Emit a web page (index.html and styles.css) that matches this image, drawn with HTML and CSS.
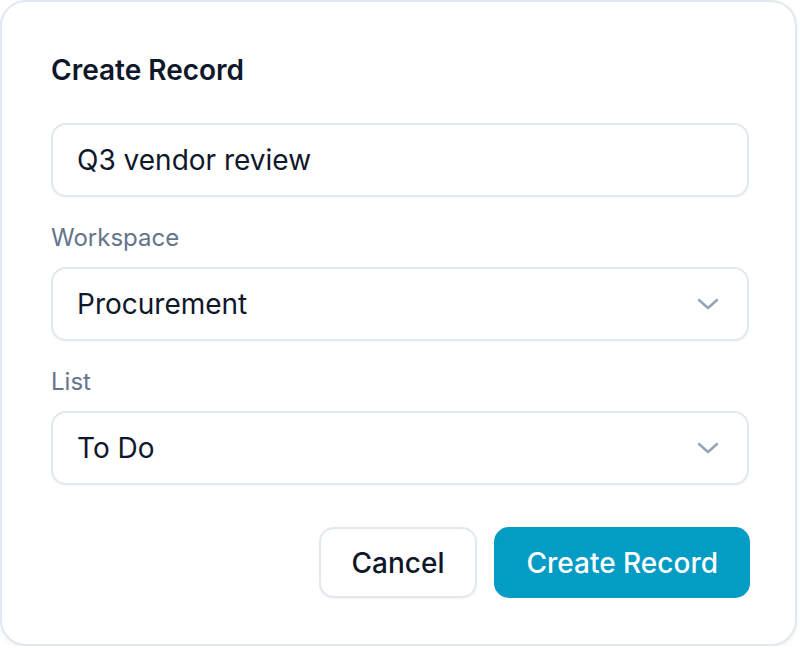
FILE: index.html
```html
<!DOCTYPE html>
<html lang="en">
<head>
<meta charset="utf-8">
<title>Create Record</title>
<link rel="stylesheet" href="styles.css">
</head>
<body>
<div class="card">
  <h2 class="title">Create Record</h2>
  <div class="input">Q3 vendor review</div>
  <div class="label">Workspace</div>
  <div class="input select">
    <span>Procurement</span>
    <svg class="chev" width="22" height="12" viewBox="0 0 22 12"><path d="M2 2 L11 10 L20 2" fill="none" stroke="#94a3b8" stroke-width="2.4" stroke-linecap="round" stroke-linejoin="round"/></svg>
  </div>
  <div class="label">List</div>
  <div class="input select">
    <span>To Do</span>
    <svg class="chev" width="22" height="12" viewBox="0 0 22 12"><path d="M2 2 L11 10 L20 2" fill="none" stroke="#94a3b8" stroke-width="2.4" stroke-linecap="round" stroke-linejoin="round"/></svg>
  </div>
  <div class="actions">
    <button class="btn btn-cancel">Cancel</button>
    <button class="btn btn-primary">Create Record</button>
  </div>
</div>
</body>
</html>
```
FILE: styles.css
```css
* { box-sizing: border-box; }
html, body { margin: 0; padding: 0; background: #ffffff; }
body { font-family: Inter, "Noto Sans", sans-serif; color: #0f172a; }
.card {
  width: 797px;
  height: 646px;
  border: 2px solid #e2e8f0;
  border-radius: 26px;
  padding: 53px 46px 0 49px;
  background: #fff;
  box-shadow: 0 2px 4px rgba(15, 23, 42, 0.06);
}
.title {
  margin: 0;
  font-size: 28px;
  line-height: 30px;
  font-weight: 600;
  color: #0f172a;
}
.input {
  margin-top: 38px;
  height: 74px;
  border: 2px solid #e2e8f0;
  border-radius: 15px;
  padding: 0 28px 0 24px;
  display: flex;
  align-items: center;
  font-size: 28px;
  color: #0f172a;
  background: #fff;
  box-shadow: 0 1px 2px rgba(15, 23, 42, 0.05);
}
.label {
  margin-top: 27px;
  margin-bottom: 15px;
  font-size: 24px;
  line-height: 28px;
  color: #64748b;
}
.label + .input { margin-top: 0; }
.select { justify-content: space-between; }
.chev { display: block; }
.actions {
  margin-top: 42px;
  display: flex;
  justify-content: flex-end;
  gap: 17px;
  margin-right: -1px;
}
.btn {
  height: 71px;
  border-radius: 15px;
  font-family: Inter, "Noto Sans", sans-serif;
  font-size: 28px;
  font-weight: 500;
  padding: 0 31px;
  cursor: pointer;
}
.btn-cancel {
  background: #fff;
  color: #0f172a;
  border: 2px solid #e2e8f0;
  box-shadow: 0 1px 2px rgba(15, 23, 42, 0.05);
}
.btn-primary {
  background: #039cc4;
  color: #fff;
  border: 2px solid #039cc4;
  padding: 0 30px;
}
```
